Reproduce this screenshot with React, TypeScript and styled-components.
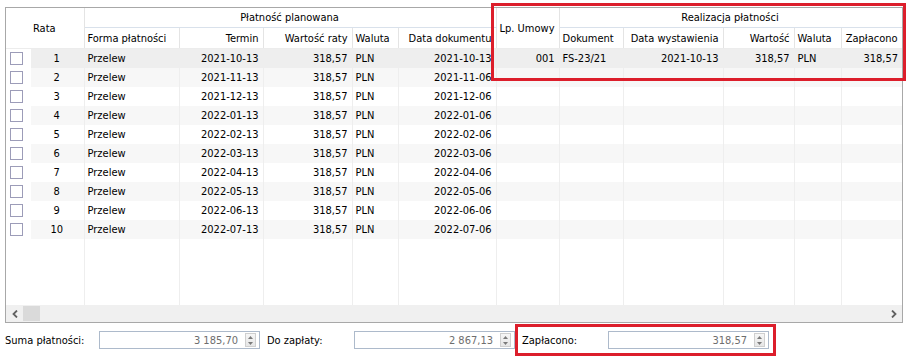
import React from "react";
import styled, { createGlobalStyle } from "styled-components";

const Global = createGlobalStyle`
  html, body { margin: 0; padding: 0; background: #ffffff; }
  body {
    font-family: "DejaVu Sans Condensed", "DejaVu Sans", "Liberation Sans", sans-serif;
    font-size: 11px;
    color: #000000;
  }
`;

const RED = "#dc1e2b";

const Page = styled.div`
  position: relative;
  width: 909px;
  height: 362px;
  box-sizing: border-box;
  padding: 7px 6px 0 5px;
`;

const GridFrame = styled.div`
  width: 898px;
  height: 316px;
  box-sizing: border-box;
  border: 1px solid #a8a8a8;
  display: flex;
  flex-direction: column;
  background: #ffffff;
`;

const TableArea = styled.div`
  flex: 1;
  overflow: hidden;
`;

const Table = styled.table`
  table-layout: fixed;
  border-collapse: collapse;
  width: 896px;
`;

type Align = "left" | "right" | "center";

const Th = styled.th<{ $align?: Align; $group?: boolean; $h?: number }>`
  font-weight: normal;
  text-align: ${(p) => p.$align || "left"};
  padding: 0 4px 0 3px;
  height: ${(p) => (p.$h ? `${p.$h}px` : "auto")};
  border-right: 1px solid #e4e4e4;
  border-bottom: 1px solid ${(p) => (p.$group ? "#d9e1eb" : "#ececec")};
  white-space: nowrap;
  overflow: hidden;
  vertical-align: middle;
  line-height: 13px;
`;

const Tr = styled.tr<{ $band: "sel" | "alt" | "none" }>`
  height: 19px;
  td:not(:first-child) {
    background: ${(p) =>
      p.$band === "sel" ? "#eeeeee" : p.$band === "alt" ? "#f7f7f7" : "transparent"};
  }
`;

const Td = styled.td<{ $align?: Align; $line?: boolean }>`
  text-align: ${(p) => p.$align || "left"};
  padding: 0 4px 0 3px;
  border-right: ${(p) => (p.$line === false ? "none" : "1px solid #eeeeee")};
  white-space: nowrap;
  overflow: hidden;
  line-height: 19px;
  vertical-align: middle;
`;

const CheckCell = styled.td`
  padding: 0 0 0 4px;
  vertical-align: middle;
  line-height: 0;
`;

const CheckBox = styled.span`
  display: inline-block;
  width: 13px;
  height: 13px;
  box-sizing: border-box;
  border: 1px solid #9c9cb8;
  background: #ffffff;
`;

const FillerRow = styled.tr`
  height: 66px;
`;

const ScrollBar = styled.div`
  height: 17px;
  display: flex;
  align-items: center;
  background: #f0f0f0;
`;

const ArrowBtn = styled.div`
  width: 17px;
  height: 17px;
  display: flex;
  align-items: center;
  justify-content: center;
`;

const Thumb = styled.div`
  width: 17px;
  height: 15px;
  background: #dadada;
`;

const Track = styled.div`
  flex: 1;
`;

const Footer = styled.div`
  display: flex;
  align-items: center;
  height: 18px;
  margin-top: 8px;
`;

const Label = styled.div<{ $w: number }>`
  width: ${(p) => p.$w}px;
  white-space: nowrap;
`;

const FieldGroup = styled.div<{ $marked?: boolean }>`
  display: flex;
  align-items: center;
  outline: ${(p) => (p.$marked ? `3px solid ${RED}` : "none")};
  outline-offset: 4px;
`;

const Field = styled.div`
  width: 161px;
  height: 18px;
  box-sizing: border-box;
  border: 1px solid #adbacb;
  display: flex;
  align-items: center;
  background: #ffffff;
`;

const FieldValue = styled.div`
  flex: 1;
  text-align: right;
  padding-right: 7px;
  color: #6e6e6e;
`;

const Spinner = styled.div`
  width: 11px;
  height: 14px;
  margin-right: 3px;
  box-sizing: border-box;
  border: 1px solid #cfcfcf;
  background: linear-gradient(#f6f6f6, #e6e6e6);
  display: flex;
  flex-direction: column;
  align-items: center;
  justify-content: space-around;
`;

const Gap = styled.div<{ $w: number }>`
  width: ${(p) => p.$w}px;
`;

const Marker = styled.div`
  position: absolute;
  left: 491px;
  top: 3px;
  width: 415px;
  height: 78px;
  box-sizing: border-box;
  border: 3px solid ${RED};
  pointer-events: none;
`;

const cols = [25, 53, 95, 84, 89, 46, 98, 63, 64, 100, 71, 47, 61];

const termin = [
  "2021-10-13", "2021-11-13", "2021-12-13", "2022-01-13", "2022-02-13",
  "2022-03-13", "2022-04-13", "2022-05-13", "2022-06-13", "2022-07-13",
];
const dataDok = [
  "2021-10-13", "2021-11-06", "2021-12-06", "2022-01-06", "2022-02-06",
  "2022-03-06", "2022-04-06", "2022-05-06", "2022-06-06", "2022-07-06",
];

const Tri = ({ up }: { up: boolean }) => (
  <svg width="5" height="3" viewBox="0 0 5 3">
    <path d={up ? "M0 3 L2.5 0 L5 3 Z" : "M0 0 L2.5 3 L5 0 Z"} fill="#7a7a7a" />
  </svg>
);

const Chevron = ({ right }: { right?: boolean }) => (
  <svg width="6" height="8" viewBox="0 0 6 8">
    <path
      d={right ? "M1 0.5 L4.5 4 L1 7.5" : "M5 0.5 L1.5 4 L5 7.5"}
      fill="none"
      stroke="#606060"
      strokeWidth="1.8"
    />
  </svg>
);

const SpinField = ({ value }: { value: string }) => (
  <Field>
    <FieldValue>{value}</FieldValue>
    <Spinner>
      <Tri up />
      <Tri up={false} />
    </Spinner>
  </Field>
);

export default function App() {
  return (
    <>
      <Global />
      <Page>
        <GridFrame>
          <TableArea>
            <Table>
              <colgroup>
                {cols.map((w, i) => (
                  <col key={i} style={{ width: w }} />
                ))}
              </colgroup>
              <thead>
                <tr>
                  <Th colSpan={2} rowSpan={2} $align="center">Rata</Th>
                  <Th colSpan={5} $align="center" $group $h={19}>Płatność planowana</Th>
                  <Th rowSpan={2}>Lp. Umowy</Th>
                  <Th colSpan={5} $align="center" $group $h={19}>Realizacja płatności</Th>
                </tr>
                <tr>
                  <Th $h={20}>Forma płatności</Th>
                  <Th $align="right">Termin</Th>
                  <Th $align="right">Wartość raty</Th>
                  <Th>Waluta</Th>
                  <Th $align="right">Data dokumentu</Th>
                  <Th>Dokument</Th>
                  <Th $align="right">Data wystawienia</Th>
                  <Th $align="right">Wartość</Th>
                  <Th>Waluta</Th>
                  <Th $align="right">Zapłacono</Th>
                </tr>
              </thead>
              <tbody>
                {termin.map((t, i) => {
                  const first = i === 0;
                  const band = first ? "sel" : i % 2 === 1 ? "alt" : "none";
                  return (
                    <Tr key={i} $band={band}>
                      <CheckCell>
                        <CheckBox />
                      </CheckCell>
                      <Td $align="center">{i + 1}</Td>
                      <Td>Przelew</Td>
                      <Td $align="right">{t}</Td>
                      <Td $align="right">318,57</Td>
                      <Td>PLN</Td>
                      <Td $align="right">{dataDok[i]}</Td>
                      <Td $align="right">{first ? "001" : ""}</Td>
                      <Td>{first ? "FS-23/21" : ""}</Td>
                      <Td $align="right">{first ? "2021-10-13" : ""}</Td>
                      <Td $align="right">{first ? "318,57" : ""}</Td>
                      <Td>{first ? "PLN" : ""}</Td>
                      <Td $align="right" $line={false}>{first ? "318,57" : ""}</Td>
                    </Tr>
                  );
                })}
                <FillerRow>
                  <Td $line={false} />
                  {cols.slice(1).map((_, i) => (
                    <Td key={i} $line={i < cols.length - 2} />
                  ))}
                </FillerRow>
              </tbody>
            </Table>
          </TableArea>
          <ScrollBar>
            <ArrowBtn>
              <Chevron />
            </ArrowBtn>
            <Thumb />
            <Track />
            <ArrowBtn>
              <Chevron right />
            </ArrowBtn>
          </ScrollBar>
        </GridFrame>
        <Footer>
          <Label $w={94}>Suma płatności:</Label>
          <FieldGroup>
            <SpinField value="3 185,70" />
          </FieldGroup>
          <Gap $w={7} />
          <Label $w={87}>Do zapłaty:</Label>
          <FieldGroup>
            <SpinField value="2 867,13" />
          </FieldGroup>
          <Gap $w={7} />
          <FieldGroup $marked>
            <Label $w={86}>Zapłacono:</Label>
            <SpinField value="318,57" />
          </FieldGroup>
        </Footer>
        <Marker />
      </Page>
    </>
  );
}
